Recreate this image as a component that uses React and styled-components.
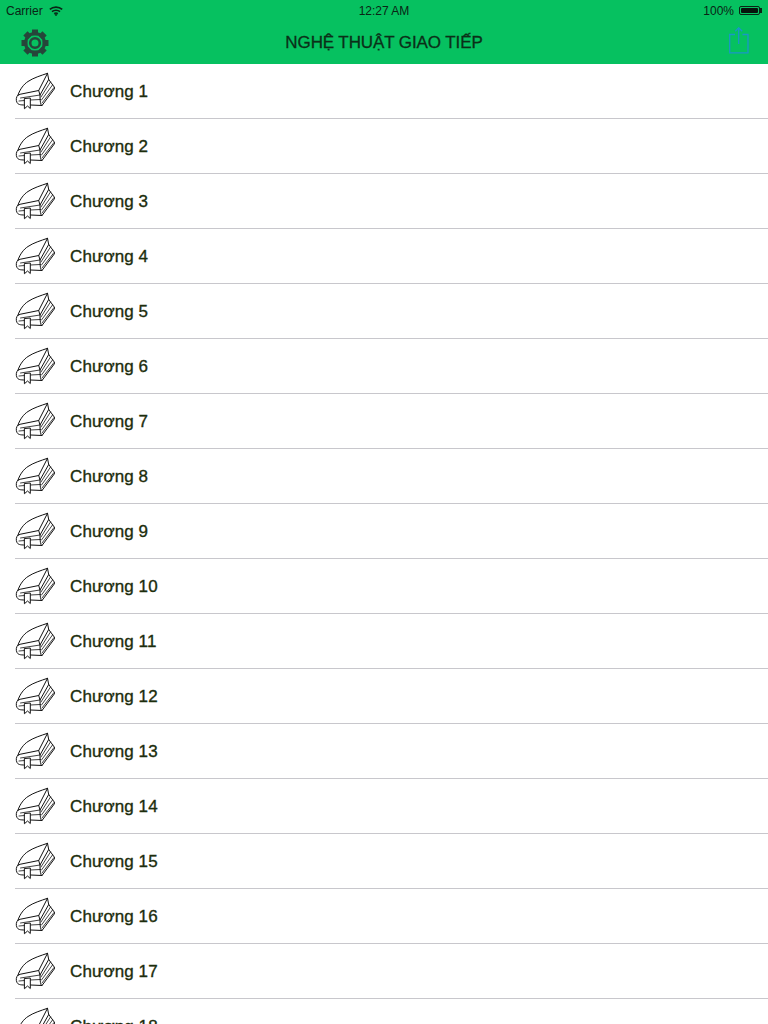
import React from 'react';
import styled, { createGlobalStyle } from 'styled-components';

const GlobalStyle = createGlobalStyle`
  html, body {
    margin: 0;
    height: 100%;
    overflow: hidden;
    background: #ffffff;
    font-family: 'Liberation Sans', Arial, sans-serif;
  }
`;

const Page = styled.div`
  width: 768px;
  height: 1024px;
  overflow: hidden;
`;

const Header = styled.header`
  height: 64px;
  background: #06c160;
`;

const StatusBar = styled.div`
  height: 21px;
  padding: 0 6px;
  display: grid;
  grid-template-columns: 1fr auto 1fr;
  align-items: center;
  font-size: 12px;
  color: #0a2415;
`;

const StatusLeft = styled.div`
  display: flex;
  align-items: center;
  gap: 6px;
`;

const StatusRight = styled.div`
  display: flex;
  align-items: center;
  justify-content: flex-end;
  gap: 5px;
`;

const Battery = styled.div`
  box-sizing: border-box;
  width: 21px;
  height: 9px;
  padding: 1px;
  border: 1px solid #0a2415;
  border-radius: 2px;
  margin-right: 2px;
  position: relative;
  &::before {
    content: '';
    display: block;
    height: 100%;
    background: #06140c;
    border-radius: 1px;
  }
  &::after {
    content: '';
    position: absolute;
    top: 1px;
    right: -3px;
    width: 2px;
    height: 5px;
    background: #0a2415;
  }
`;

const NavBar = styled.div`
  height: 43px;
  padding: 0 19px 0 21px;
  display: grid;
  grid-template-columns: 1fr auto 1fr;
  align-items: center;
`;

const NavRight = styled.div`
  display: flex;
  justify-content: flex-end;
  margin-bottom: 4px;
`;

const Title = styled.h1`
  margin: 0 0 0 -2px;
  font-size: 17px;
  font-weight: 400;
  letter-spacing: -0.1px;
  color: #0b2f18;
  -webkit-text-stroke: 0.3px #0b2f18;
`;

const List = styled.ul`
  margin: 0;
  padding: 0;
  list-style: none;
`;

const Row = styled.li`
  height: 55px;
  margin-left: 15px;
  box-sizing: border-box;
  border-bottom: 1px solid #c8c7cc;
  display: flex;
  align-items: center;
  gap: 15px;
`;

const RowLabel = styled.span`
  padding-top: 2px;
  font-size: 17px;
  letter-spacing: 0.1px;
  color: #1c2d0c;
  -webkit-text-stroke: 0.35px #1c2d0c;
`;

const WifiIcon = () => (
  <svg width="14" height="10" viewBox="0 0 14 10" fill="none" stroke="#0a2415" strokeWidth="1.6">
    <path d="M0.8 3.4C4.2 0.3 9.8 0.3 13.2 3.4" />
    <path d="M3 5.6C5.2 3.7 8.8 3.7 11 5.6" />
    <path d="M5.2 7.7C6.3 6.9 7.7 6.9 8.8 7.7" />
    <path d="M7 9.8L5.9 8.6H8.1Z" fill="#0a2415" strokeWidth="0.6" />
  </svg>
);

const teeth = [0, 45, 90, 135, 180, 225, 270, 315];

const GearIcon = () => (
  <svg width="28" height="28" viewBox="0 0 28 28" fill="none">
    {teeth.map((a) => (
      <rect key={a} x="11" y="0.5" width="6" height="6" fill="#26463a" transform={`rotate(${a} 14 14)`} />
    ))}
    <circle cx="14" cy="14" r="9.5" stroke="#26463a" strokeWidth="3" />
    <circle cx="14" cy="14" r="4.8" stroke="#26463a" strokeWidth="2.6" />
  </svg>
);

const ShareIcon = () => (
  <svg width="20" height="27" viewBox="0 0 20 27" fill="none" stroke="#1a96c8" strokeWidth="1.3">
    <path d="M6 7.5H0.7V25.8H19V7.5H13.5" />
    <path d="M9.7 17V0.8M6.2 4.2L9.7 0.8L13.2 4.2" />
  </svg>
);

const BookIcon = () => (
  <svg width="40" height="38" viewBox="0 0 40 38" fill="none" stroke="#111" strokeWidth="1" strokeLinejoin="round" strokeLinecap="round">
    <path d="M3 23C5 17 9 12 13 9.5C18 6 26 3.5 32.5 1.3L23.7 18.5L5.5 22.2Z" fill="#fff" />
    <path d="M32.5 1.3L33.7 7.5L25 23L23.7 18.5" />
    <path d="M33.7 7.5L40 16L27 33.5C25.5 33.5 25 29 25 23" />
    <path d="M35.5 10L26 25M37.5 13L26.5 28M39 15.5L27 31" strokeWidth="0.8" />
    <path d="M3 23C1 25 0.8 28 2 30.5C3 32.5 5 33 9.7 33M15.3 33L27 33.5" />
    <path d="M5.5 26L25 23M4 29L9.7 28.5M15.3 28L25.5 27.5" strokeWidth="0.8" />
    <path d="M9.7 26.5L15.3 26V36.5L12.5 34L9.7 36.5Z" fill="#fff" />
  </svg>
);

const chapters = Array.from({ length: 18 }, (_, i) => `Chương ${i + 1}`);

export default function App() {
  return (
    <Page>
      <GlobalStyle />
      <Header>
        <StatusBar>
          <StatusLeft>
            <span>Carrier</span>
            <WifiIcon />
          </StatusLeft>
          <span>12:27 AM</span>
          <StatusRight>
            <span>100%</span>
            <Battery />
          </StatusRight>
        </StatusBar>
        <NavBar>
          <GearIcon />
          <Title>NGHỆ THUẬT GIAO TIẾP</Title>
          <NavRight>
            <ShareIcon />
          </NavRight>
        </NavBar>
      </Header>
      <List>
        {chapters.map((name) => (
          <Row key={name}>
            <BookIcon />
            <RowLabel>{name}</RowLabel>
          </Row>
        ))}
      </List>
    </Page>
  );
}
